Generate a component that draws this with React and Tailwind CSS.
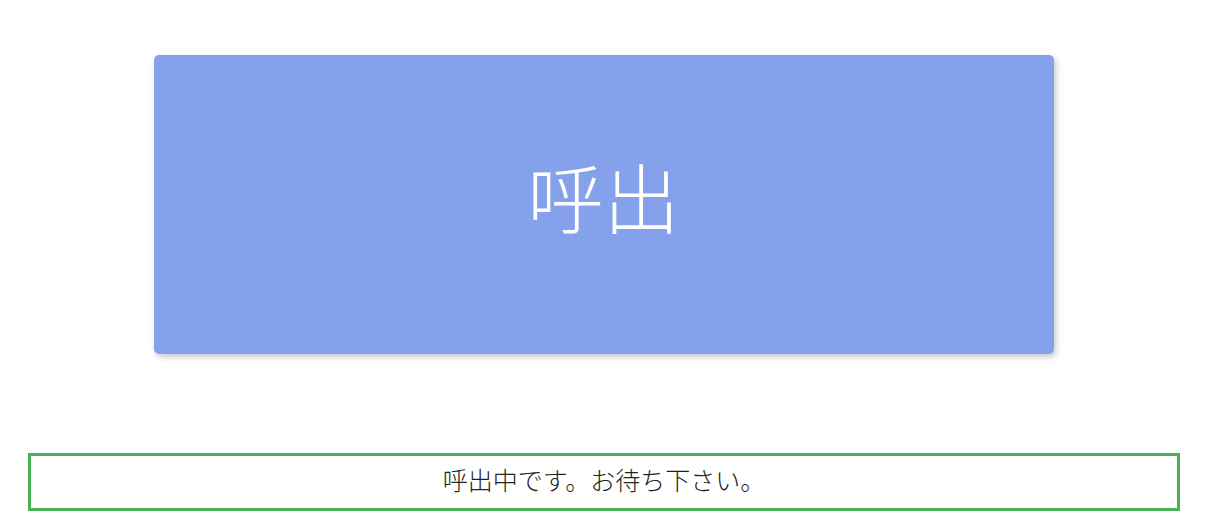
import React from "react";

const App = () => {
  return (
    <div
      className="min-h-screen bg-white"
      style={{ fontFamily: '"Noto Sans CJK JP", "Noto Sans", sans-serif' }}
    >
      <div className="flex justify-center pt-[55px]">
        <button className="w-[900px] h-[299px] pb-[20px] bg-[#86a1ec] rounded-[5px] shadow-[2px_3px_6px_rgba(0,0,0,0.22)] text-white text-[76px] font-light leading-none flex items-center justify-center">
          呼出
        </button>
      </div>

      <div className="mt-[99px] ml-[28px] mr-[27px] h-[58px] pb-[4px] border-[3px] border-[#4caf50] flex items-center justify-center text-[25px] font-light text-[#222]">
        呼出中です。お待ち下さい。
      </div>
    </div>
  );
};

export default App;
